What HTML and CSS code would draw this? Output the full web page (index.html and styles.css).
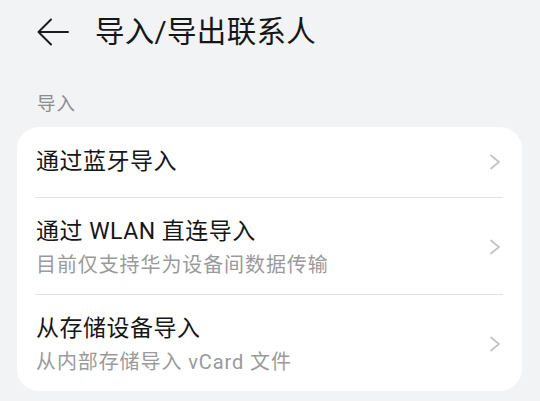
FILE: index.html
```html
<!DOCTYPE html>
<html lang="zh-CN">
<head>
<meta charset="utf-8">
<title>导入/导出联系人</title>
<link rel="stylesheet" href="styles.css">
</head>
<body>
<header class="topbar">
  <svg class="back" width="32" height="28" viewBox="0 0 32 28" aria-hidden="true">
    <path d="M1.5 14 H31 M14 1.5 L1.5 14 L14 26.5" fill="none" stroke="#1b1b1b" stroke-width="2" stroke-linecap="round" stroke-linejoin="round"/>
  </svg>
  <h1 class="title">导入/导出联系人</h1>
</header>
<div class="section-label">导入</div>
<div class="card">
  <div class="row row-single">
    <div class="row-text">
      <div class="row-title">通过蓝牙导入</div>
    </div>
    <svg class="chev" width="12" height="16" viewBox="0 0 12 16" aria-hidden="true"><path d="M2 1.5 L10 8 L2 14.5" fill="none" stroke="#c4c4c4" stroke-width="1.8" stroke-linecap="round" stroke-linejoin="round"/></svg>
  </div>
  <div class="divider"></div>
  <div class="row">
    <div class="row-text">
      <div class="row-title">通过 WLAN 直连导入</div>
      <div class="row-sub">目前仅支持华为设备间数据传输</div>
    </div>
    <svg class="chev" width="12" height="16" viewBox="0 0 12 16" aria-hidden="true"><path d="M2 1.5 L10 8 L2 14.5" fill="none" stroke="#c4c4c4" stroke-width="1.8" stroke-linecap="round" stroke-linejoin="round"/></svg>
  </div>
  <div class="divider"></div>
  <div class="row">
    <div class="row-text">
      <div class="row-title">从存储设备导入</div>
      <div class="row-sub">从内部存储导入 vCard 文件</div>
    </div>
    <svg class="chev" width="12" height="16" viewBox="0 0 12 16" aria-hidden="true"><path d="M2 1.5 L10 8 L2 14.5" fill="none" stroke="#c4c4c4" stroke-width="1.8" stroke-linecap="round" stroke-linejoin="round"/></svg>
  </div>
</div>
</body>
</html>
```
FILE: styles.css
```css
html, body {
  margin: 0;
  padding: 0;
}
body {
  background: #f1f3f5;
  font-family: Roboto, "Noto Sans CJK SC", sans-serif;
  color: #1a1a1a;
  width: 540px;
  height: 401px;
  overflow: hidden;
}
.topbar {
  display: flex;
  align-items: center;
  height: 64px;
  padding-left: 37px;
}
.back {
  display: block;
  flex: none;
}
.title {
  margin: 0 0 0 26px;
  font-size: 29.5px;
  font-weight: 400;
  line-height: 40px;
  color: #161616;
  letter-spacing: 0.3px;
}
.section-label {
  margin: 28px 0 0 37px;
  font-size: 18.5px;
  line-height: 24px;
  color: #8c8c8c;
  letter-spacing: 1px;
}
.card {
  margin: 11px 18px 0 17px;
  background: #ffffff;
  border-radius: 22px;
  padding: 0 21px 0 19px;
}
.row {
  display: flex;
  align-items: center;
  justify-content: space-between;
  padding: 18px 0 16px;
}
.row-single {
  padding: 19px 0 19px;
}
.row-text {
  display: flex;
  flex-direction: column;
}
.row-title {
  font-size: 23px;
  font-weight: 400;
  line-height: 32px;
  color: #161616;
  letter-spacing: 0.5px;
}
.row-sub {
  margin-top: 4px;
  font-size: 20px;
  line-height: 26px;
  color: #9a9a9a;
  letter-spacing: 0.9px;
}
.chev {
  display: block;
  flex: none;
}
.divider {
  height: 1px;
  background: #e3e3e3;
  margin-left: -1px;
  margin-right: -2px;
}
```
